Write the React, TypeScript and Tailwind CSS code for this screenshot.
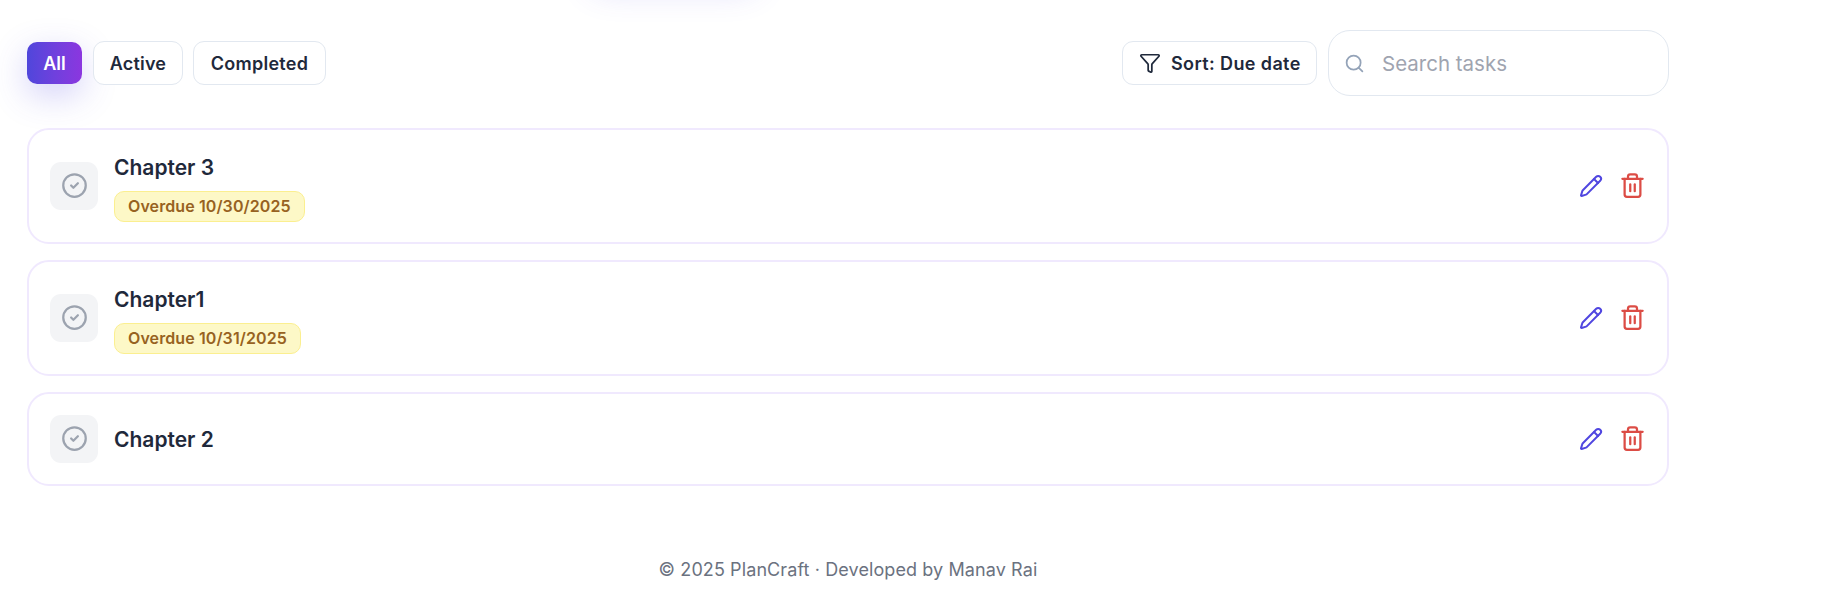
import { CircleCheck, Funnel, Pencil, Search, Trash2 } from "lucide-react";

type Task = { title: string; overdue?: string };

const tasks: Task[] = [
  { title: "Chapter 3", overdue: "Overdue 10/30/2025" },
  { title: "Chapter1", overdue: "Overdue 10/31/2025" },
  { title: "Chapter 2" },
];

function Toolbar() {
  return (
    <div className="flex h-[66px] items-center">
      <button className="h-[42px] w-[55px] rounded-[10px] bg-gradient-to-r from-[#4f46db] to-[#8b36df] text-[18px] font-semibold text-white shadow-[0_11px_34px_rgba(79,70,229,0.25)]">
        All
      </button>
      <button className="ml-[11px] h-[44px] w-[90px] rounded-[11px] border border-[#e2e8f0] bg-white text-[18px] font-semibold tracking-[0.2px] text-[#1f293b]">
        Active
      </button>
      <button className="ml-[10px] h-[44px] w-[133px] rounded-[11px] border border-[#e2e8f0] bg-white text-[18px] font-semibold tracking-[0.25px] text-[#1f293b]">
        Completed
      </button>
      <button className="ml-auto flex h-[44px] w-[195px] items-center gap-[10px] rounded-[11px] border border-[#e2e8f0] bg-white pl-[16px] text-[18px] font-semibold tracking-[0.38px] whitespace-nowrap text-[#1f293b]">
        <Funnel size={22} strokeWidth={1.9} className="shrink-0" />
        Sort: Due date
      </button>
      <label className="ml-[11px] flex h-[66px] w-[341px] items-center gap-[17px] rounded-[22px] border border-[#e2e8f0] bg-white pl-[15px]">
        <Search size={21} strokeWidth={2} className="shrink-0 text-[#94a3b8]" />
        <input
          placeholder="Search tasks"
          className="mt-[3px] w-[260px] bg-transparent text-[20.5px] text-[#1f293b] outline-none placeholder:text-[#9fa4b0]"
        />
      </label>
    </div>
  );
}

function TaskCard({ title, overdue }: Task) {
  return (
    <li
      className={`flex items-center rounded-[22px] border-2 border-[#f0e9fe] bg-white pr-[21px] pl-[21px] ${
        overdue ? "h-[116px]" : "h-[94px]"
      }`}
    >
      <button className="flex size-[48px] items-center justify-center rounded-[11px] bg-[#f3f4f6] pb-[1px] text-[#9ca3af]">
        <CircleCheck size={27} strokeWidth={2} />
      </button>
      <div className={`ml-[16px] flex flex-col items-start ${overdue ? "pt-[2px]" : ""}`}>
        <h3 className="text-[21px] leading-[31px] font-semibold text-[#1f293b]">{title}</h3>
        {overdue && (
          <span className="mt-[8px] flex h-[31px] items-center rounded-[10px] border border-[#fbef90] bg-[#fdf8c7] px-[13px] pb-[1px] text-[16px] font-semibold tracking-[0.1px] text-[#976221]">
            {overdue}
          </span>
        )}
      </div>
      <div className="ml-auto flex items-center gap-[16px] pb-[1px]">
        <button className="text-[#5046e0]">
          <Pencil size={24} strokeWidth={2} />
        </button>
        <button className="text-[#dc4c45]">
          <Trash2 size={27} strokeWidth={2} />
        </button>
      </div>
    </li>
  );
}

export default function App() {
  return (
    <main className="relative h-[608px] w-full overflow-hidden bg-white pt-[30px] pl-[27px] font-['Inter',sans-serif]">
      <div className="absolute -top-[64px] left-[592px] h-[42px] w-[164px] rounded-[11px] shadow-[0_11px_34px_rgba(79,70,229,0.2)]" />
      <div className="relative w-[1642px]">
        <Toolbar />
        <ul className="mt-[32px] flex flex-col gap-[16px]">
          {tasks.map((task) => (
            <TaskCard key={task.title} {...task} />
          ))}
        </ul>
        <footer className="mt-[70px] text-center text-[18px] leading-[28px] tracking-[0.1px] text-[#6b7280]">
          © 2025 PlanCraft · Developed by Manav Rai
        </footer>
      </div>
    </main>
  );
}
